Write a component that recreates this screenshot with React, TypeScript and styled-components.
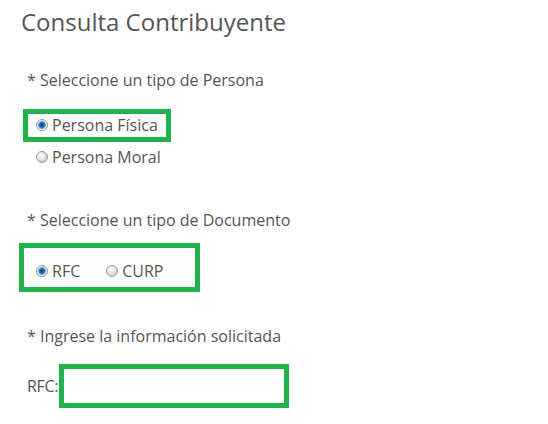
import React, { useState } from 'react';
import styled, { createGlobalStyle } from 'styled-components';

// -------------------
// Internal Components
// -------------------

const GlobalStyle = createGlobalStyle`
  html, body {
    margin: 0;
    padding: 0;
    background: #ffffff;
  }
  body {
    font-family: 'Open Sans', 'Liberation Sans', sans-serif;
    color: #555555;
  }
`;

const Page = styled.div`
  display: flex;
  flex-direction: column;
  align-items: flex-start;
  padding: 5px 0 0 21px;
`;

const Title = styled.h2`
  margin: 0;
  font-size: 24px;
  font-weight: 400;
  line-height: 33px;
  color: #555555;
`;

const Label = styled.div<{ top: number }>`
  margin-top: ${p => p.top}px;
  padding-left: 6px;
  font-size: 16px;
  line-height: 20px;
`;

const Highlight = styled.div<{ pad: string; width?: number }>`
  display: flex;
  align-items: center;
  box-sizing: border-box;
  border: 5px solid #22b14c;
  padding: ${p => p.pad};
  width: ${p => (p.width ? `${p.width}px` : 'auto')};
`;

const Option = styled.label<{ gap?: number }>`
  display: flex;
  align-items: center;
  font-size: 16px;
  line-height: 20px;
  margin-right: ${p => p.gap || 0}px;
  cursor: pointer;
`;

const Radio = styled.span<{ checked: boolean }>`
  display: inline-block;
  box-sizing: border-box;
  width: 12px;
  height: 12px;
  margin-right: 4px;
  border-radius: 50%;
  border: 1px solid #9a9a9a;
  background: ${p =>
    p.checked
      ? 'radial-gradient(circle at 50% 50%, #0a3d6b 0px, #1767b3 2px, #3d8ad6 3px, #6fa8dc 3.6px, #f2f2f2 4.2px, #dcdcdc 6px)'
      : 'radial-gradient(circle at 40% 35%, #ffffff 0px, #ececec 3px, #d0d0d0 6px)'};
`;

const Loose = styled.div`
  margin-top: 5px;
  padding-left: 15px;
`;

const FieldRow = styled.div`
  display: flex;
  align-items: center;
  margin-top: 18px;
  padding-left: 6px;
  font-size: 16px;
`;

const FieldLabel = styled.span`
  margin-right: 1px;
  letter-spacing: -0.3px;
`;

const Input = styled.input`
  box-sizing: border-box;
  width: 230px;
  height: 44px;
  border: 5px solid #22b14c;
  outline: none;
  padding: 0 6px;
  font-family: 'Open Sans', 'Liberation Sans', sans-serif;
  font-size: 16px;
  color: #555555;
`;

// -------------------
// Exported Components
// -------------------

export default function App() {
  const [persona, setPersona] = useState('fisica');
  const [documento, setDocumento] = useState('rfc');
  const [valor, setValor] = useState('');

  return (
    <Page>
      <GlobalStyle />
      <Title>Consulta Contribuyente</Title>

      <Label top={32}>* Seleccione un tipo de Persona</Label>
      <Highlight pad="1px 8px 2px 8px" style={{ marginTop: 19, marginLeft: 2 }}>
        <Option onClick={() => setPersona('fisica')}>
          <Radio checked={persona === 'fisica'} />
          Persona Física
        </Option>
      </Highlight>
      <Loose>
        <Option onClick={() => setPersona('moral')}>
          <Radio checked={persona === 'moral'} />
          Persona Moral
        </Option>
      </Loose>

      <Label top={43}>* Seleccione un tipo de Documento</Label>
      <Highlight pad="13px 12px 6px 12px" width={181} style={{ marginTop: 13, marginLeft: -2 }}>
        <Option gap={26} onClick={() => setDocumento('rfc')}>
          <Radio checked={documento === 'rfc'} />
          RFC
        </Option>
        <Option onClick={() => setDocumento('curp')}>
          <Radio checked={documento === 'curp'} />
          CURP
        </Option>
      </Highlight>

      <Label top={34}>* Ingrese la información solicitada</Label>
      <FieldRow>
        <FieldLabel>{documento === 'rfc' ? 'RFC:' : 'CURP:'}</FieldLabel>
        <Input value={valor} onChange={e => setValor(e.currentTarget.value)} />
      </FieldRow>
    </Page>
  );
}
